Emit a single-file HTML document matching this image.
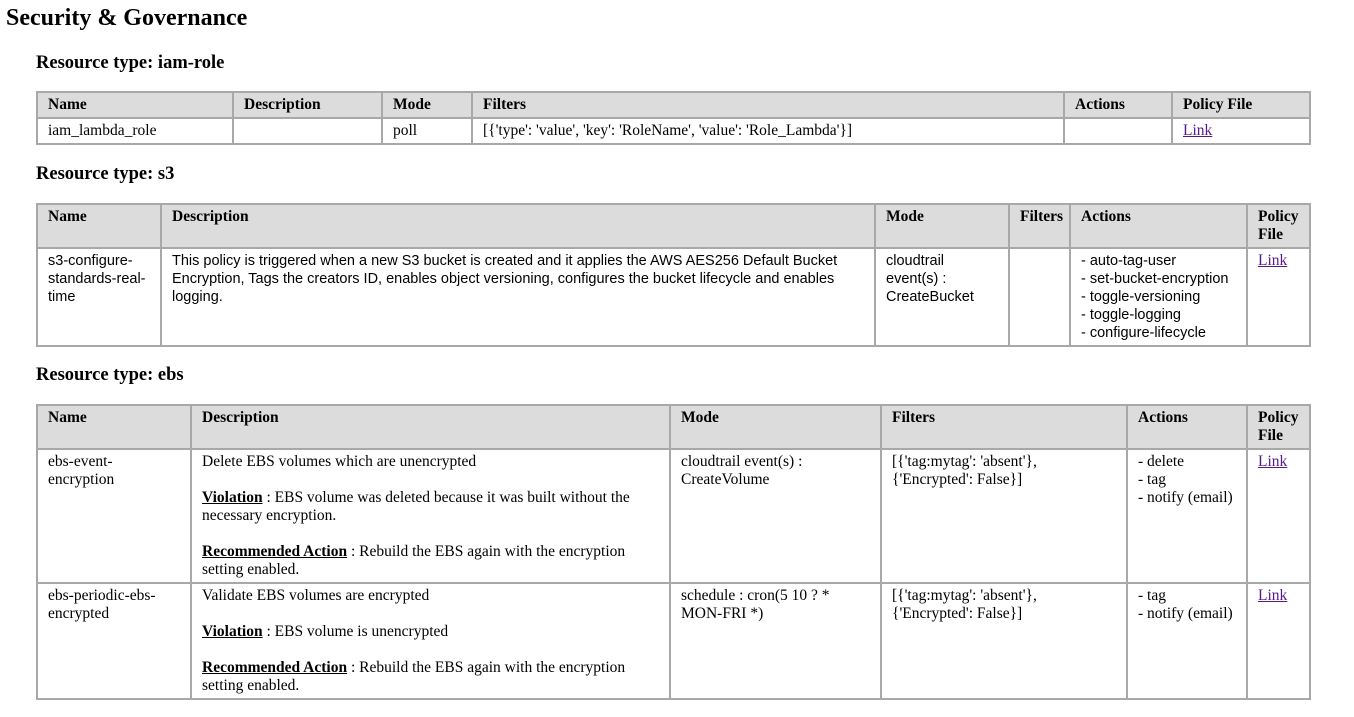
<!DOCTYPE html>
<html><head><meta charset="utf-8"><style>
body{margin:0;width:1354px;height:717px;background:#fff;font-family:"Liberation Serif",serif;font-size:16px;color:#000;position:relative;overflow:hidden}
h1{position:absolute;left:6px;top:5px;margin:0;font-size:24px;font-weight:bold}
h3{position:absolute;left:36px;margin:0;font-size:18.5px;font-weight:bold}
table{position:absolute;left:36px;width:1273px;border-collapse:collapse;table-layout:fixed}
td,th{border:2px solid #a8a8a8;padding:3px 10px 3px 10px;vertical-align:top;text-align:left;line-height:18px;font-size:15.5px}
th{background:#dcdcdc;font-weight:bold}
a{color:#551a8b;text-decoration:underline}
.sans td{font-family:"Liberation Sans",sans-serif;font-size:14.5px}
.sans td a{font-family:"Liberation Serif",serif;font-size:15.5px}
</style></head><body>
<h1>Security &amp; Governance</h1>
<h3 style="top:53px">Resource type: iam-role</h3>
<table style="top:91px">
<colgroup><col style="width:196px"><col style="width:149px"><col style="width:90px"><col style="width:592px"><col style="width:108px"><col style="width:138px"></colgroup>
<tr><th>Name</th><th>Description</th><th>Mode</th><th>Filters</th><th>Actions</th><th>Policy File</th></tr>
<tr><td>iam_lambda_role</td><td></td><td>poll</td><td>[{'type': 'value', 'key': 'RoleName', 'value': 'Role_Lambda'}]</td><td></td><td><a>Link</a></td></tr>
</table>
<h3 style="top:164px">Resource type: s3</h3>
<table class="sans" style="top:203px">
<colgroup><col style="width:124px"><col style="width:714px"><col style="width:134px"><col style="width:61px"><col style="width:177px"><col style="width:63px"></colgroup>
<tr><th>Name</th><th>Description</th><th>Mode</th><th>Filters</th><th>Actions</th><th>Policy File</th></tr>
<tr><td>s3-configure-standards-real-time</td><td>This policy is triggered when a new S3 bucket is created and it applies the AWS AES256 Default Bucket Encryption, Tags the creators ID, enables object versioning, configures the bucket lifecycle and enables logging.</td><td>cloudtrail event(s) : CreateBucket</td><td></td><td>- auto-tag-user<br>- set-bucket-encryption<br>- toggle-versioning<br>- toggle-logging<br>- configure-lifecycle</td><td><a>Link</a></td></tr>
</table>
<h3 style="top:365px">Resource type: ebs</h3>
<table style="top:404px">
<colgroup><col style="width:154px"><col style="width:479px"><col style="width:211px"><col style="width:246px"><col style="width:120px"><col style="width:63px"></colgroup>
<tr><th>Name</th><th>Description</th><th>Mode</th><th>Filters</th><th>Actions</th><th>Policy File</th></tr>
<tr><td>ebs-event-<br>encryption</td><td>Delete EBS volumes which are unencrypted<br><br><u><b>Violation</b></u> : EBS volume was deleted because it was built without the necessary encryption.<br><br><u><b>Recommended Action</b></u> : Rebuild the EBS again with the encryption setting enabled.</td><td>cloudtrail event(s) : CreateVolume</td><td>[{'tag:mytag': 'absent'}, {'Encrypted': False}]</td><td>- delete<br>- tag<br>- notify (email)</td><td><a>Link</a></td></tr>
<tr><td>ebs-periodic-ebs-encrypted</td><td>Validate EBS volumes are encrypted<br><br><u><b>Violation</b></u> : EBS volume is unencrypted<br><br><u><b>Recommended Action</b></u> : Rebuild the EBS again with the encryption setting enabled.</td><td>schedule : cron(5 10 ? * MON-FRI *)</td><td>[{'tag:mytag': 'absent'}, {'Encrypted': False}]</td><td>- tag<br>- notify (email)</td><td><a>Link</a></td></tr>
</table>
</body></html>
